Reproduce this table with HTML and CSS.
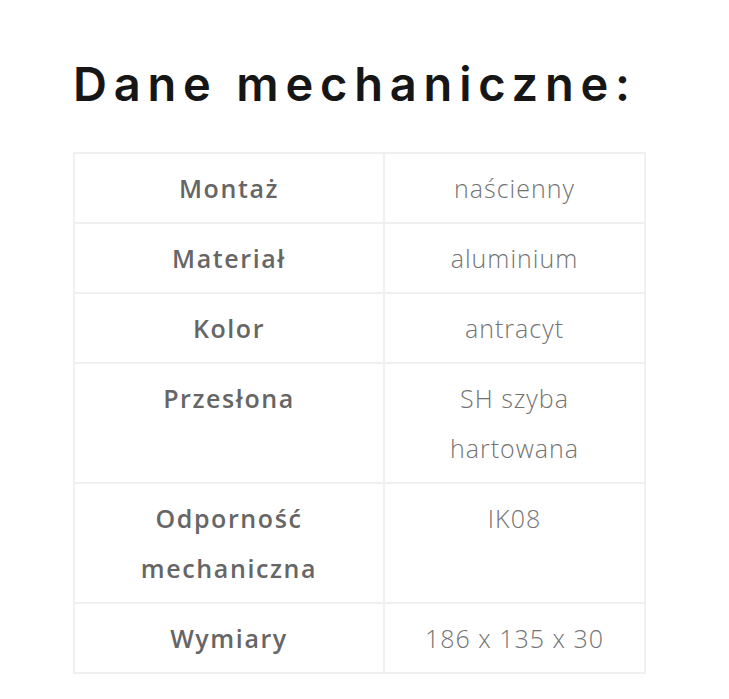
FILE: index.html
```html
<!DOCTYPE html>
<html lang="pl">
<head>
<meta charset="utf-8">
<title>Dane mechaniczne</title>
<link rel="stylesheet" href="styles.css">
</head>
<body>
<main class="page">
  <h2 class="title">Dane mechaniczne:</h2>
  <table class="specs">
    <tbody>
      <tr><th>Montaż</th><td>naścienny</td></tr>
      <tr><th>Materiał</th><td>aluminium</td></tr>
      <tr><th>Kolor</th><td>antracyt</td></tr>
      <tr><th>Przesłona</th><td>SH szyba<br>hartowana</td></tr>
      <tr><th>Odporność<br>mechaniczna</th><td>IK08</td></tr>
      <tr><th>Wymiary</th><td>186 x 135 x 30</td></tr>
    </tbody>
  </table>
</main>
</body>
</html>
```

FILE: styles.css
```css
html, body {
  margin: 0;
  padding: 0;
  background: #ffffff;
}

.page {
  padding: 56px 0 0 73px;
  font-family: "Open Sans", Inter, "Liberation Sans", sans-serif;
  font-feature-settings: "calt" 0;
}

.title {
  margin: 0 0 40px 0;
  font-family: Inter, "Open Sans", sans-serif;
  font-size: 47px;
  line-height: 56px;
  font-weight: 600;
  letter-spacing: 6.8px;
  color: #161616;
}

.specs {
  border-collapse: collapse;
  width: 573px;
  table-layout: fixed;
}

.specs th,
.specs td {
  border: 2px solid #f0f0f0;
  padding: 9px 4px 9px 4px;
  font-size: 25px;
  line-height: 50px;
  text-align: center;
  vertical-align: top;
}

.specs th {
  width: 300px;
  font-weight: 600;
  letter-spacing: 1.6px;
  color: #666666;
}

.specs td {
  font-weight: 300;
  letter-spacing: 1px;
  color: #737373;
}
```
